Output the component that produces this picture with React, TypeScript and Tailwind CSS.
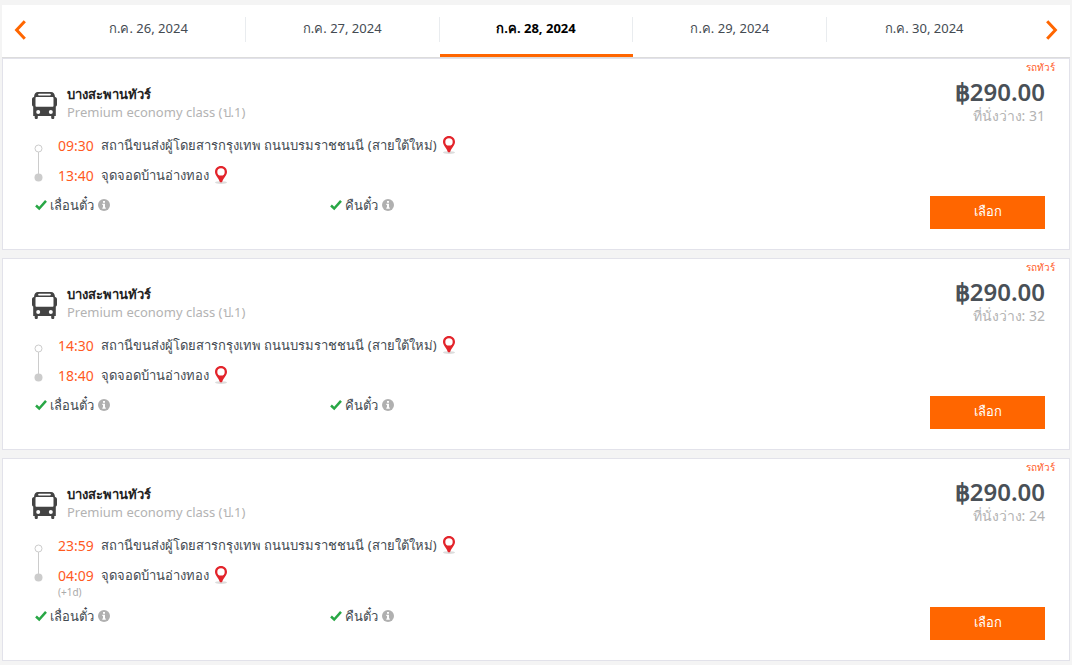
import React from "react";

type Trip = {
  id: number;
  depart: string;
  arrive: string;
  nextDay?: boolean;
  seats: number;
};

const dates = ["ก.ค. 26, 2024", "ก.ค. 27, 2024", "ก.ค. 28, 2024", "ก.ค. 29, 2024", "ก.ค. 30, 2024"];
const selectedDate = 2;

const trips: Trip[] = [
  { id: 1, depart: "09:30", arrive: "13:40", seats: 31 },
  { id: 2, depart: "14:30", arrive: "18:40", seats: 32 },
  { id: 3, depart: "23:59", arrive: "04:09", nextDay: true, seats: 24 },
];

function Chevron({ flip = false }: { flip?: boolean }) {
  return (
    <svg width="12" height="20" viewBox="0 0 12 20" fill="none" stroke="#ff6600" strokeWidth="3" aria-hidden="true">
      <path d={flip ? "M1.2 1.2 9.4 10 1.2 18.8" : "M10.8 1.2 2.6 10 10.8 18.8"} />
    </svg>
  );
}

function BusIcon() {
  return (
    <svg width="25" height="27" viewBox="0 0 25 27" className="shrink-0" aria-hidden="true">
      <path
        fill="#444"
        fillRule="evenodd"
        d="M6 0h13c2.400 0 3.700 1.500 4 5 1.300.2 2 1 2 2.200v5.300c0 1-.5 1.700-1.200 1.900v9.600H22.300v1.700c0 .8-.5 1.300-1.500 1.300s-1.600-.5-1.600-1.300V24H5.800v1.700c0 .8-.5 1.300-1.500 1.300s-1.600-.5-1.600-1.300V24H1.200v-9.600C.5 14.200 0 13.500 0 12.500V7.200C0 6 .7 5.200 2 5c.3-3.500 1.600-5 4-5Z M7 1.700a.9.9 0 0 0 0 1.800h11a.9.9 0 0 0 0-1.800Z M4.600 4.900c-.7 0-1.100.4-1.100 1.100v7.700c0 .6.4 1 1.100 1h15.800c.7 0 1.100-.4 1.100-1V6c0-.7-.4-1.100-1.100-1.100Z M6.200 18a2 2 0 1 0 0 4 2 2 0 0 0 0-4Z M18.800 18a2 2 0 1 0 0 4 2 2 0 0 0 0-4Z"
      />
    </svg>
  );
}

function PinIcon() {
  return (
    <svg width="12" height="18" viewBox="0 0 12 18" aria-hidden="true">
      <ellipse cx="6" cy="16.600" rx="6" ry="1.400" fill="#dcdcdc" />
      <path
        fill="#e3242b"
        fillRule="evenodd"
        d="M6 0C2.500 0 0 2.500 0 5.900 0 9.500 4 12.200 5 16.300h2c1-4.100 5-6.800 5-10.400C12 2.500 9.500 0 6 0Zm0 2.200a3.700 3.700 0 1 1 0 7.400 3.700 3.700 0 0 1 0-7.400Z"
      />
    </svg>
  );
}

function RouteLine() {
  return (
    <svg width="9" height="38" viewBox="0 0 9 38" aria-hidden="true">
      <path d="M4.500 8v22" stroke="#ccc" />
      <circle cx="4.500" cy="4.500" r="3.500" fill="#fff" stroke="#ccc" />
      <circle cx="4.500" cy="33.500" r="4" fill="#ccc" />
    </svg>
  );
}

function Stop({ time, place }: { time: string; place: string }) {
  return (
    <div className="flex h-[30px] items-center">
      <span className="w-[43px] pb-0.5 text-[14px] text-[#ff5a1f]">{time}</span>
      <span className="whitespace-nowrap">{place}</span>
      <button type="button" aria-label="แผนที่" className="ml-1.5 pb-0.5">
        <PinIcon />
      </button>
    </div>
  );
}

function Policy({ label }: { label: string }) {
  return (
    <div className="flex items-center">
      <svg width="12" height="12" viewBox="0 0 12 12" aria-hidden="true">
        <path d="M1 6.500 4.200 9.500 11 1.800" fill="none" stroke="#28a745" strokeWidth="2.500" />
      </svg>
      <span className="ml-[3px] whitespace-nowrap">{label}</span>
      <button type="button" aria-label={label} className="ml-1">
        <svg width="12" height="12" viewBox="0 0 12 12" aria-hidden="true">
          <circle cx="6" cy="6" r="6" fill="#b0b0b0" />
          <path fill="#fff" d="M5 2h2v1.700H5ZM4.300 4.700H7v3.700h.8v1.300H4.300V8.400H5V6h-.7Z" />
        </svg>
      </button>
    </div>
  );
}

function TripCard({ trip }: { trip: Trip }) {
  return (
    <article className="flex justify-between border border-[#e2e2ea] bg-white pb-5">
      <div className="min-w-0 flex-1 pt-[26px] pb-[13px] pl-[29px]">
        <div className="flex items-center gap-2.5">
          <div className="pt-1">
            <BusIcon />
          </div>
          <div>
            <h2 className="text-[13px] leading-[18px] font-semibold text-[#222]">บางสะพานทัวร์</h2>
            <p className="text-[13px] leading-[18px] text-[#b3b3b3]">Premium economy class (ป.1)</p>
          </div>
        </div>
        <div className="mt-2.5 flex gap-[15px] pl-0.5">
          <div className="w-[9px] pt-[13px]">
            <RouteLine />
          </div>
          <div>
            <Stop time={trip.depart} place="สถานีขนส่งผู้โดยสารกรุงเทพ ถนนบรมราชชนนี (สายใต้ใหม่)" />
            <Stop time={trip.arrive} place="จุดจอดบ้านอ่างทอง" />
            {trip.nextDay && <div className="-mt-1.5 h-[17px] text-[10px] leading-[15px] text-[#aaa]">(+1d)</div>}
          </div>
        </div>
        <div className="mt-[3px] grid max-w-[592px] grid-cols-2 pl-[3px] leading-[22px]">
          <Policy label="เลื่อนตั๋ว" />
          <Policy label="คืนตั๋ว" />
        </div>
      </div>
      <div className="flex flex-col items-end pr-6">
        <div className="-mr-2.5 pt-px text-[10px] leading-[14px] font-medium text-[#ff5a1f]">รถทัวร์</div>
        <div className="mt-1 text-[24px] leading-7 font-semibold text-[#495057]">฿290.00</div>
        <div className="text-[14px] leading-5 text-[#b3b3b3]">ที่นั่งว่าง: {trip.seats}</div>
        <button type="button" className="mt-auto h-[33px] w-[115px] bg-[#ff6600] pb-0.5 text-[13px] text-white">
          เลือก
        </button>
      </div>
    </article>
  );
}

export default function App() {
  return (
    <div className="min-h-screen bg-[#f4f4f4] px-0.5 pt-[5px] pb-1 font-['Noto_Sans',sans-serif] text-[13px] text-[#444b52]">
      <nav className="flex h-[52px] items-center bg-white">
        <button type="button" aria-label="ก่อนหน้า" className="flex h-full w-[50px] shrink-0 items-center pb-0.5 pl-3">
          <Chevron />
        </button>
        <div className="grid h-full flex-1 grid-cols-5">
          {dates.map((date, i) => (
            <button
              key={date}
              type="button"
              className={
                i === selectedDate
                  ? "flex flex-col border-b-[3px] border-[#ff6600] pt-3 font-bold text-black"
                  : "flex flex-col border-b-[3px] border-transparent pt-3"
              }
            >
              <span
                className={
                  i < dates.length - 1
                    ? "flex h-[25px] w-full justify-center border-r border-[#e9ecef] leading-[23px]"
                    : "flex h-[25px] w-full justify-center leading-[23px]"
                }
              >
                {date}
              </span>
            </button>
          ))}
        </div>
        <button type="button" aria-label="ถัดไป" className="flex h-full w-[49px] shrink-0 items-center justify-end pr-3 pb-0.5">
          <Chevron flip />
        </button>
      </nav>
      <main className="flex flex-col gap-2 border-t border-[#dcdcdc]">
        {trips.map((trip) => (
          <TripCard key={trip.id} trip={trip} />
        ))}
      </main>
    </div>
  );
}
